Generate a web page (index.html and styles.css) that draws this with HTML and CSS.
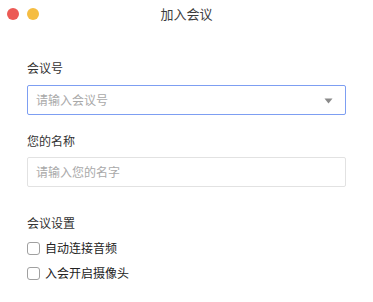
FILE: index.html
```html
<!DOCTYPE html>
<html lang="zh">
<head>
<meta charset="utf-8">
<title>加入会议</title>
<link rel="stylesheet" href="styles.css">
</head>
<body>
<div class="window">
  <div class="titlebar">
    <div class="lights">
      <span class="light red"></span>
      <span class="light yellow"></span>
    </div>
    <div class="title">加入会议</div>
    <div class="spacer"></div>
  </div>
  <div class="content">
    <div class="field first">
      <div class="label">会议号</div>
      <div class="input focused">
        <span class="placeholder">请输入会议号</span>
        <svg class="caret" width="9" height="6" viewBox="0 0 9 6"><path d="M0.5 0.5 L8.5 0.5 L4.5 5.5 Z" fill="#8a8a8a"/></svg>
      </div>
    </div>
    <div class="field second">
      <div class="label">您的名称</div>
      <div class="input">
        <span class="placeholder">请输入您的名字</span>
      </div>
    </div>
    <div class="settings">
      <div class="label">会议设置</div>
      <label class="check-row first-row"><span class="box"></span><span class="check-text">自动连接音频</span></label>
      <label class="check-row"><span class="box"></span><span class="check-text">入会开启摄像头</span></label>
    </div>
  </div>
</div>
</body>
</html>
```

FILE: styles.css
```css
* { box-sizing: border-box; }
html, body {
  margin: 0;
  padding: 0;
  background: #ffffff;
  font-family: "Noto Sans CJK SC", "Noto Sans", sans-serif;
  color: #333333;
}
.window {
  width: 373px;
  height: 302px;
  background: #ffffff;
}
.titlebar {
  height: 27px;
  display: grid;
  grid-template-columns: 1fr auto 1fr;
  align-items: center;
}
.lights {
  display: flex;
  gap: 8px;
  padding-left: 7px;
  padding-top: 0px;
}
.light {
  width: 12px;
  height: 12px;
  border-radius: 50%;
  display: block;
}
.red { background: #ec5a55; }
.yellow { background: #f5bd42; }
.title {
  font-size: 13px;
  line-height: 16px;
  color: #3c3c3c;
}
.content {
  padding: 33px 27px 0 27px;
}
.label {
  font-size: 12px;
  line-height: 16px;
  color: #333333;
}
.field .label { margin-bottom: 9px; }
.field.second { margin-top: 18px; }
.field.second .label { margin-bottom: 8px; }
.input {
  height: 30px;
  border: 1px solid #e2e2e2;
  border-radius: 2px;
  display: flex;
  align-items: center;
  justify-content: space-between;
  padding: 0 12px 0 8px;
}
.input.focused { border-color: #7d9ef2; }
.placeholder {
  font-size: 12px;
  line-height: 16px;
  color: #a9a9a9;
}
.caret { display: block; margin-top: 1px; }
.settings { margin-top: 28px; }
.settings .label { margin-bottom: 7px; }
.check-row {
  display: flex;
  align-items: center;
  gap: 5px;
  height: 20px;
}
.check-row + .check-row { margin-top: 5px; }
.box {
  width: 13px;
  height: 13px;
  border: 1px solid #a0a0a0;
  border-radius: 3px;
  background: #fff;
  display: block;
}
.check-text {
  font-size: 12px;
  line-height: 16px;
  color: #222222;
}
```
